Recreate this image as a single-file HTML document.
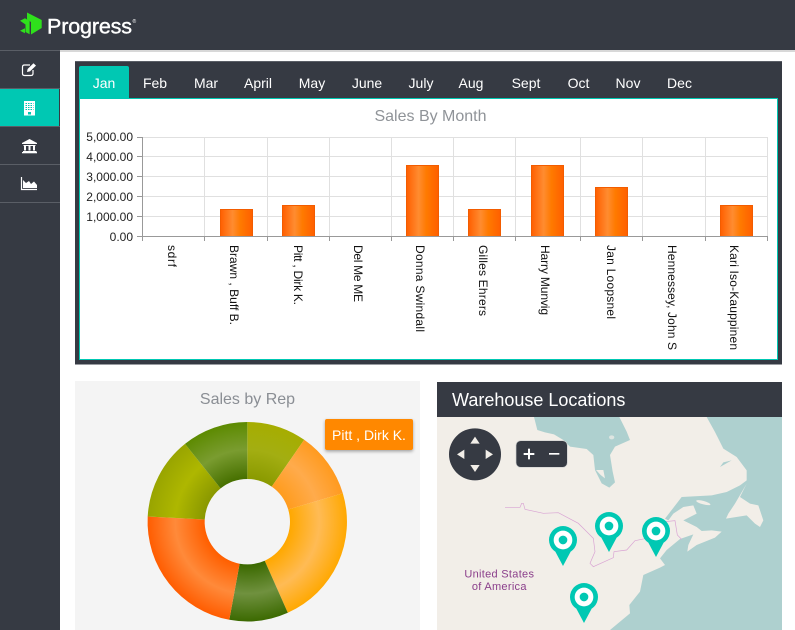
<!DOCTYPE html>
<html><head><meta charset="utf-8"><title>Dashboard</title>
<style>
html,body{margin:0;padding:0;background:#fff;width:795px;height:630px;overflow:hidden}
svg{display:block;font-family:"Liberation Sans",Arial,sans-serif}
</style></head><body>
<svg width="795" height="630" viewBox="0 0 795 630" xmlns="http://www.w3.org/2000/svg">
<defs>
<linearGradient id="bar" x1="0" x2="1" y1="0" y2="0"><stop offset="0" stop-color="#ff5f00"/><stop offset=".38" stop-color="#ff8c30"/><stop offset=".62" stop-color="#ff7a00"/><stop offset="1" stop-color="#ff5f00"/></linearGradient>
<radialGradient id="p1" gradientUnits="userSpaceOnUse" cx="247.3" cy="521.7" r="100"><stop offset=".43" stop-color="#8a9a00"/><stop offset=".72" stop-color="#a3ae12"/><stop offset="1" stop-color="#a6ad00"/></radialGradient>
<radialGradient id="p2" gradientUnits="userSpaceOnUse" cx="247.3" cy="521.7" r="100"><stop offset=".43" stop-color="#ff9c1e"/><stop offset=".72" stop-color="#ffab4c"/><stop offset="1" stop-color="#ff9a1e"/></radialGradient>
<radialGradient id="p3" gradientUnits="userSpaceOnUse" cx="247.3" cy="521.7" r="100"><stop offset=".43" stop-color="#ffa800"/><stop offset=".72" stop-color="#ffbb55"/><stop offset="1" stop-color="#ffa800"/></radialGradient>
<radialGradient id="p4" gradientUnits="userSpaceOnUse" cx="247.3" cy="521.7" r="100"><stop offset=".43" stop-color="#3b6900"/><stop offset=".72" stop-color="#70913f"/><stop offset="1" stop-color="#3b6900"/></radialGradient>
<radialGradient id="p5" gradientUnits="userSpaceOnUse" cx="247.3" cy="521.7" r="100"><stop offset=".43" stop-color="#ff5f00"/><stop offset=".72" stop-color="#ff8a3a"/><stop offset="1" stop-color="#ff5c00"/></radialGradient>
<radialGradient id="p6" gradientUnits="userSpaceOnUse" cx="247.3" cy="521.7" r="100"><stop offset=".43" stop-color="#8a9800"/><stop offset=".72" stop-color="#aeb700"/><stop offset="1" stop-color="#98a400"/></radialGradient>
<radialGradient id="p7" gradientUnits="userSpaceOnUse" cx="247.3" cy="521.7" r="100"><stop offset=".43" stop-color="#477000"/><stop offset=".72" stop-color="#7a9c30"/><stop offset="1" stop-color="#5c8a00"/></radialGradient>
<filter id="sh" x="-20%" y="-20%" width="140%" height="150%"><feDropShadow dx="0" dy="1.5" stdDeviation="1.5" flood-color="#000" flood-opacity=".35"/></filter>
</defs>

<!-- header -->
<rect x="0" y="0" width="795" height="50" fill="#363a43"/>
<rect x="60" y="50" width="735" height="2" fill="#d8d8d8"/>
<g fill="#2fe01c">
<polygon points="27,12.500 41.700,20 41.700,28 31,34.500 31,22 27,19.500"/>
<polygon points="20,20.700 25,18.300 29.600,21 29.600,34.300 25.500,32 25.500,24.500"/>
<polygon points="20,30.700 25,28.300 25,33.300"/>
</g>
<text x="47" y="33.500" font-size="21.500" fill="#fff" stroke="#fff" stroke-width=".4" textLength="85" lengthAdjust="spacing">Progress</text>
<text x="132.500" y="23" font-size="5" fill="#fff">®</text>

<!-- sidebar -->
<rect x="0" y="50" width="60" height="580" fill="#363a43"/>
<rect x="0" y="50" width="60" height="1" fill="#5a5e66"/>
<rect x="0" y="88" width="60" height="1" fill="#5a5e66"/>
<rect x="0" y="89" width="59" height="37" fill="#00c8b3"/>
<rect x="0" y="126" width="60" height="1" fill="#5a5e66"/>
<rect x="0" y="164" width="60" height="1" fill="#5a5e66"/>
<rect x="0" y="202" width="60" height="1" fill="#5a5e66"/>
<!-- edit icon -->
<path d="M33,70 V73.500 Q33,75.500 31,75.500 H24.500 Q22.500,75.500 22.500,73.500 V67 Q22.500,65 24.500,65 H30" fill="none" stroke="#fff" stroke-width="1.200"/>
<path d="M27,72 L27.600,69 L33.500,63.200 L36,65.600 L30,71.400 Z" fill="#fff"/>
<!-- building icon -->
<rect x="24" y="101" width="11" height="14.500" fill="#fff"/>
<g fill="#00c8b3"><rect x="25.500" y="103" width="8" height="1"/><rect x="25.500" y="105" width="8" height="1"/><rect x="25.500" y="107" width="8" height="1"/><rect x="25.500" y="109" width="8" height="1"/><rect x="28" y="112" width="3" height="2.500"/>
<rect x="27" y="102.500" width="1" height="8" fill="#fff"/><rect x="29.500" y="102.500" width="1" height="8" fill="#fff"/><rect x="32" y="102.500" width="1" height="8" fill="#fff"/></g>
<!-- bank icon -->
<g fill="#fff"><polygon points="29.500,139 37,143 37,144 22,144 22,143"/><rect x="23.500" y="145" width="12" height="1"/><rect x="24" y="146" width="2" height="4.500"/><rect x="28.500" y="146" width="2" height="4.500"/><rect x="33" y="146" width="2" height="4.500"/><rect x="23" y="151" width="13.500" height="1"/><rect x="22" y="152" width="15" height="1.300"/></g>
<!-- chart icon -->
<path d="M21.500,177 V189.500 H37" fill="none" stroke="#fff" stroke-width="1.200"/>
<path d="M23,188 V180 L26,183 L29,181 L31,184 L34,181.500 L37,185 V188 Z" fill="#fff"/>

<!-- tabs panel -->
<rect x="75" y="61" width="707" height="303.500" fill="#363a43"/>
<rect x="75" y="61" width="707" height="1" fill="#5a5e66"/>
<rect x="79" y="98" width="699" height="262" fill="#00c8b3"/>
<rect x="80" y="99" width="697" height="260" fill="#fff"/>
<path d="M79,98 V68 Q79,66 81,66 H127 Q129,66 129,68 V98 Z" fill="#00c8b3"/>
<g font-size="14" fill="#fff" text-anchor="middle">
<text x="104" y="88">Jan</text><text x="155" y="88">Feb</text><text x="206" y="88">Mar</text><text x="258" y="88">April</text><text x="312" y="88">May</text><text x="367" y="88">June</text><text x="421" y="88">July</text><text x="471" y="88">Aug</text><text x="526" y="88">Sept</text><text x="578.500" y="88">Oct</text><text x="628" y="88">Nov</text><text x="679.500" y="88">Dec</text>
</g>
<text x="430.500" y="121" font-size="16" fill="#8f9398" text-anchor="middle">Sales By Month</text>

<!-- chart grid -->
<g fill="#e0e0e0">
<rect x="142" y="137" width="626" height="1"/><rect x="142" y="156" width="626" height="1"/><rect x="142" y="176" width="626" height="1"/><rect x="142" y="196" width="626" height="1"/><rect x="142" y="216" width="626" height="1"/>
<rect x="204" y="137" width="1" height="100"/><rect x="267" y="137" width="1" height="100"/><rect x="329" y="137" width="1" height="100"/><rect x="391" y="137" width="1" height="100"/><rect x="453" y="137" width="1" height="100"/><rect x="515" y="137" width="1" height="100"/><rect x="580" y="137" width="1" height="100"/><rect x="642" y="137" width="1" height="100"/><rect x="705" y="137" width="1" height="100"/><rect x="767" y="137" width="1" height="100"/>
</g>
<g fill="url(#bar)" stroke="#f25c00" stroke-width="1">
<rect x="220.500" y="209.500" width="32" height="27"/>
<rect x="282.500" y="205.500" width="32" height="31"/>
<rect x="406.500" y="165.500" width="32" height="71"/>
<rect x="468.500" y="209.500" width="32" height="27"/>
<rect x="531.500" y="165.500" width="32" height="71"/>
<rect x="595.500" y="187.500" width="32" height="49"/>
<rect x="720.500" y="205.500" width="32" height="31"/>
</g>
<g fill="#999">
<rect x="142" y="137" width="1" height="100"/><rect x="142" y="236" width="626" height="1"/>
<rect x="137" y="137" width="5" height="1"/><rect x="137" y="156" width="5" height="1"/><rect x="137" y="176" width="5" height="1"/><rect x="137" y="196" width="5" height="1"/><rect x="137" y="216" width="5" height="1"/><rect x="137" y="236" width="5" height="1"/>
<rect x="142" y="237" width="1" height="4"/><rect x="204" y="237" width="1" height="4"/><rect x="267" y="237" width="1" height="4"/><rect x="329" y="237" width="1" height="4"/><rect x="391" y="237" width="1" height="4"/><rect x="453" y="237" width="1" height="4"/><rect x="515" y="237" width="1" height="4"/><rect x="580" y="237" width="1" height="4"/><rect x="642" y="237" width="1" height="4"/><rect x="705" y="237" width="1" height="4"/><rect x="767" y="237" width="1" height="4"/>
</g>
<g font-size="12" fill="#222" text-anchor="end">
<text x="133" y="141">5,000.00</text><text x="133" y="161">4,000.00</text><text x="133" y="181">3,000.00</text><text x="133" y="201">2,000.00</text><text x="133" y="221">1,000.00</text><text x="133" y="241">0.00</text>
</g>
<g font-size="12" fill="#111" lengthAdjust="spacing">
<text transform="translate(168,245) rotate(90)" textLength="22">sdrf</text>
<text transform="translate(230,245) rotate(90)" textLength="80">Brawn , Buff B.</text>
<text transform="translate(294,245) rotate(90)" textLength="60">Pitt , Dirk K.</text>
<text transform="translate(354,245) rotate(90)" textLength="57">Del Me ME</text>
<text transform="translate(416,245) rotate(90)" textLength="87">Donna Swindall</text>
<text transform="translate(479,245) rotate(90)" textLength="71">Gilles Ehrers</text>
<text transform="translate(541,245) rotate(90)" textLength="70">Harry Munvig</text>
<text transform="translate(607,245) rotate(90)" textLength="74">Jan Loopsnel</text>
<text transform="translate(668,245) rotate(90)" textLength="105">Hennessey, John S</text>
<text transform="translate(730,245) rotate(90)" textLength="105">Kari Iso-Kauppinen</text>
</g>

<!-- sales by rep -->
<rect x="75" y="381" width="345" height="249" fill="#f4f4f4"/>
<text x="247.500" y="404" font-size="16" fill="#8a8e94" text-anchor="middle">Sales by Rep</text>
<path fill="url(#p1)" d="M247.300,422 A99.700,99.700 0 0 1 304.200,439.800 L271.700,486.600 A42.700,42.700 0 0 0 247.300,479 Z"/>
<path fill="url(#p2)" d="M304.200,439.800 A99.700,99.700 0 0 1 342.800,493.200 L288.200,509.500 A42.700,42.700 0 0 0 271.700,486.600 Z"/>
<path fill="url(#p3)" d="M342.800,493.200 A99.700,99.700 0 0 1 287.800,612.800 L264.700,560.700 A42.700,42.700 0 0 0 288.200,509.500 Z"/>
<path fill="url(#p4)" d="M287.800,612.800 A99.700,99.700 0 0 1 229.300,619.800 L239.600,563.700 A42.700,42.700 0 0 0 264.700,560.700 Z"/>
<path fill="url(#p5)" d="M229.300,619.800 A99.700,99.700 0 0 1 147.700,516.500 L204.700,519.500 A42.700,42.700 0 0 0 239.600,563.700 Z"/>
<path fill="url(#p6)" d="M147.700,516.500 A99.700,99.700 0 0 1 185,443.900 L220.600,488.400 A42.700,42.700 0 0 0 204.700,519.500 Z"/>
<path fill="url(#p7)" d="M185,443.900 A99.700,99.700 0 0 1 247.300,422 L247.300,479 A42.700,42.700 0 0 0 220.600,488.400 Z"/>
<rect x="325" y="419" width="88" height="31" rx="2" fill="#ff8800" filter="url(#sh)"/>
<text x="369" y="440" font-size="14" fill="#fff" text-anchor="middle">Pitt , Dirk K.</text>

<!-- map -->
<svg x="437" y="382" width="345" height="248" viewBox="0 0 345 248">
<rect width="345" height="248" fill="#f2eee8"/>
<g transform="translate(-7 -7) scale(.33333)" fill="#aed0cf">
<path d="M312,126 L322,165 L345,172 L372,178 L400,195 L420,215 L470,222 L490,240 L495,285 L515,325 L538,338 L555,322 L548,290 L540,240 L555,215 L600,195 L590,170 L575,140 L568,126 Z"/>
<path d="M830,126 L1056,126 L1056,765 L540,765 L600,715 L598,690 L630,650 L640,600 L690,578 L705,570 L690,550 L710,525 L750,492 L790,478 L775,510 L772,530 L800,510 L855,488 L875,470 L845,466 L815,468 L800,456 L760,436 L800,416 L790,391 L760,396 L730,416 L715,436 L705,431 L755,366 L845,361 L890,351 L930,331 L950,316 L950,286 L920,246 L880,221 L855,171 Z"/>
</g>
<g transform="translate(-7 -7) scale(.33333)" fill="#f2eee8">
<path d="M950,326 L930,366 L960,386 L985,391 L1000,436 L990,456 L975,446 L950,421 L888,431 L895,416 L915,386 Z"/>
<ellipse cx="820" cy="383" rx="22" ry="5" transform="rotate(15 820 383)"/>
<path d="M870,276 L905,256 L880,262 Z" fill="#aed0cf"/>
<path d="M498,285 L520,285 L525,310 L512,300 Z"/>
<ellipse cx="545" cy="187" rx="8" ry="6" opacity=".7"/>
<path fill="none" stroke="#d9a3d3" stroke-width="2" d="M225,397 L270,397 L275,385 L280,385 L285,403 L340,415 L385,413 L445,445 L470,470 L490,490 L495,530 L480,565 L490,575 L550,548 L552,530 L590,525 L615,497 L650,490 L705,440 L735,437 L742,480 L755,493"/>
<g fill="#00c8b3">
<circle cx="399" cy="495" r="42"/><polygon points="376,530 422,530 399,573"/>
<circle cx="537" cy="453" r="42"/><polygon points="514,488 560,488 537,531"/>
<circle cx="678" cy="468" r="42"/><polygon points="655,503 701,503 678,546"/>
<circle cx="462" cy="666" r="42"/><polygon points="439,701 485,701 462,744"/>
</g>
<g fill="#fff"><circle cx="399" cy="495" r="28"/><circle cx="537" cy="453" r="28"/><circle cx="678" cy="468" r="28"/><circle cx="462" cy="666" r="28"/></g>
<g fill="#00c8b3"><circle cx="399" cy="495" r="13"/><circle cx="537" cy="453" r="13"/><circle cx="678" cy="468" r="13"/><circle cx="462" cy="666" r="13"/></g>
<circle cx="135" cy="238" r="78" fill="#363a43"/>
<g fill="#f2eee8"><polygon points="135,185 149,206 121,206"/><polygon points="135,291 149,270 121,270"/><polygon points="81,238 103,224 103,252"/><polygon points="189,238 167,224 167,252"/></g>
<rect x="258" y="197" width="154" height="80" rx="14" fill="#363a43" stroke="#cfd0d0" stroke-width="2"/>
<g fill="#fff"><rect x="281" y="234" width="32" height="6"/><rect x="294" y="221" width="6" height="32"/><rect x="357" y="234" width="31" height="5"/></g>
</g>
<g font-size="11" fill="#8b3f8b" text-anchor="middle" letter-spacing=".3">
<text x="62.300" y="195.500">United States</text><text x="62.300" y="208">of America</text>
</g>
</svg>
<rect x="437" y="382" width="345" height="35" fill="#363a43"/>
<text x="452" y="406" font-size="18" fill="#fff">Warehouse Locations</text>
</svg>
</body></html>
